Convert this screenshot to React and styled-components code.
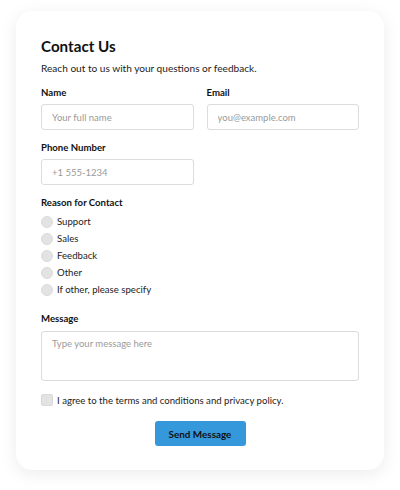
import React from 'react';
import styled, { createGlobalStyle } from 'styled-components';

const GlobalStyle = createGlobalStyle`
  body {
    margin: 0;
    background: #ffffff;
    font-family: Lato, "Noto Sans", sans-serif;
    color: #1c1c1c;
  }
  * {
    box-sizing: border-box;
  }
`;

const Page = styled.div`
  width: 400px;
  padding: 11px 16px 20px;
`;

const Card = styled.form`
  width: 368px;
  background: #fff;
  border-radius: 16px;
  box-shadow: 0 4px 18px rgba(0, 0, 0, 0.08);
  padding: 25px 25px 24px;
  display: flex;
  flex-direction: column;
`;

const Title = styled.h1`
  margin: 0;
  font-size: 15.2px;
  line-height: 20px;
  font-weight: 700;
  color: #111;
`;

const Subtitle = styled.p`
  margin: 4px 0 0;
  font-size: 10.1px;
  line-height: 16px;
  color: #1c1c1c;
`;

const Row = styled.div`
  display: grid;
  grid-template-columns: 1fr 1fr;
  column-gap: 13px;
  margin-top: ${props => props.$top || 11}px;
`;

const Field = styled.div`
  display: flex;
  flex-direction: column;
  margin-top: ${props => props.$top || 0}px;
`;

const Label = styled.label`
  font-size: 9.6px;
  line-height: 14px;
  font-weight: 700;
  color: #111;
  margin-bottom: ${props => props.$gap || 4}px;
`;

const Input = styled.input`
  height: 26px;
  width: 100%;
  border: 1px solid #dcdcdc;
  border-radius: 3px;
  padding: 0 10px;
  font-family: inherit;
  font-size: 9.5px;
  color: #222;
  outline: none;

  &::placeholder {
    color: #9a9a9a;
  }
`;

const TextArea = styled.textarea`
  height: 50px;
  width: 100%;
  border: 1px solid #dcdcdc;
  border-radius: 3px;
  padding: 6px 10px;
  font-family: inherit;
  font-size: 9.5px;
  color: #222;
  resize: none;
  outline: none;
  display: block;

  &::placeholder {
    color: #9a9a9a;
  }
`;

const RadioList = styled.div`
  display: flex;
  flex-direction: column;
`;

const Option = styled.label`
  display: flex;
  align-items: center;
  gap: 4px;
  height: 17px;
  font-size: 9.6px;
  color: #1c1c1c;
`;

const RadioDot = styled.span`
  width: 12px;
  height: 12px;
  border-radius: 50%;
  background: #e3e3e3;
  border: 1px solid #dadada;
  flex-shrink: 0;
`;

const CheckRow = styled.label`
  display: flex;
  align-items: center;
  gap: 4px;
  height: 16px;
  margin-top: 11px;
  font-size: 9.6px;
  color: #1c1c1c;
`;

const CheckBox = styled.span`
  width: 12px;
  height: 12px;
  border-radius: 2px;
  background: #e3e3e3;
  border: 1px solid #dadada;
  flex-shrink: 0;
`;

const Actions = styled.div`
  display: flex;
  justify-content: center;
  margin-top: 13px;
`;

const SendButton = styled.button`
  width: 91px;
  height: 25px;
  border: none;
  border-radius: 3px;
  background: #3498db;
  color: #111;
  font-family: inherit;
  font-size: 9.9px;
  font-weight: 700;
  cursor: pointer;
`;

const reasons = ['Support', 'Sales', 'Feedback', 'Other', 'If other, please specify'];

const App = () => {
  return (
    <Page>
      <GlobalStyle />
      <Card onSubmit={e => e.preventDefault()}>
        <Title>Contact Us</Title>
        <Subtitle>Reach out to us with your questions or feedback.</Subtitle>

        <Row $top={10}>
          <Field>
            <Label>Name</Label>
            <Input placeholder="Your full name" />
          </Field>
          <Field>
            <Label>Email</Label>
            <Input placeholder="you@example.com" />
          </Field>
        </Row>

        <Row>
          <Field>
            <Label>Phone Number</Label>
            <Input placeholder="+1 555-1234" />
          </Field>
        </Row>

        <Field $top={11}>
          <Label $gap={3}>Reason for Contact</Label>
          <RadioList>
            {reasons.map(r => (
              <Option key={r}>
                <RadioDot />
                {r}
              </Option>
            ))}
          </RadioList>
        </Field>

        <Field $top={14}>
          <Label $gap={5}>Message</Label>
          <TextArea placeholder="Type your message here" />
        </Field>

        <CheckRow>
          <CheckBox />
          I agree to the terms and conditions and privacy policy.
        </CheckRow>

        <Actions>
          <SendButton type="submit">Send Message</SendButton>
        </Actions>
      </Card>
    </Page>
  );
};

export default App;
